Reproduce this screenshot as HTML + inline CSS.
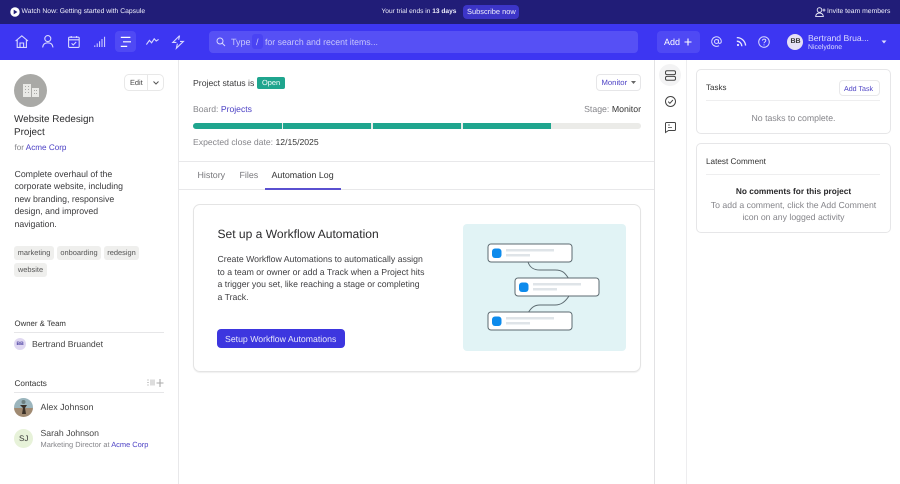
<!DOCTYPE html>
<html><head><meta charset="utf-8">
<style>
html,body{margin:0;padding:0;width:900px;height:484px;overflow:hidden;background:#fff;font-family:"Liberation Sans",sans-serif;color:#333;text-rendering:geometricPrecision}
.t{position:absolute;white-space:nowrap;line-height:14px;font-size:10px}
.b{position:absolute;box-sizing:border-box}
a{color:#4a3fc4;text-decoration:none}
.g{color:#85858a}
svg{position:absolute;overflow:visible}
.tag{position:absolute;height:14px;background:#efefed;border-radius:3px;font-size:7.45px;line-height:14px;color:#555;text-align:center}
</style></head><body>
<!-- top bar -->
<div class="b" style="left:0;top:0;width:900px;height:24px;background:#211d78"></div>
<svg style="left:10px;top:7px" width="10" height="10"><circle cx="5" cy="5" r="4.7" fill="#fff"/><path d="M3.7 2.6 7.4 5 3.7 7.4Z" fill="#211d78"/></svg>
<div class="t" style="left:21.5px;top:5px;color:#eeeefa;font-size:6.8px">Watch Now: Getting started with Capsule</div>
<div class="t" style="left:381.5px;top:5px;color:#eeeefa;font-size:6.6px">Your trial ends in <b>13 days</b></div>
<div class="b" style="left:463px;top:5px;width:56px;height:14px;background:#3c35c8;border-radius:4px"></div>
<div class="t" style="left:467px;top:5px;color:#eeeefa;font-size:7.45px">Subscribe now</div>
<svg style="left:815px;top:7px" width="11" height="10" fill="none" stroke="#eeeefa" stroke-width=".9"><circle cx="4.5" cy="3" r="2.3"/><path d="M.6 9.4C1 6.8 2.6 6 4.5 6S8 6.8 8.4 9.4ZM9 1.6v3M7.5 3.1h3"/></svg>
<div class="t" style="left:827px;top:5px;color:#eeeefa;font-size:6.8px">Invite team members</div>

<!-- nav -->
<div class="b" style="left:0;top:24px;width:900px;height:36px;background:#3d36f2"></div>
<div class="b" style="left:115px;top:31px;width:21px;height:21px;background:#4f49f4;border-radius:4px"></div>
<svg style="left:15px;top:35px" width="14" height="13" fill="none" stroke="#d8d8ff" stroke-width="1.1"><path d="M.6 6 6.8.8 13 6M2.2 5v7.4h9.2V5M5 12.4V8h3.6v4.4"/></svg>
<svg style="left:42px;top:35px" width="12" height="13" fill="none" stroke="#d8d8ff" stroke-width="1.1"><circle cx="5.8" cy="3.6" r="3"/><path d="M.6 12.4C1 9 3 7.8 5.8 7.8S10.6 9 11 12.4"/></svg>
<svg style="left:68px;top:36px" width="12" height="12" fill="none" stroke="#d8d8ff" stroke-width="1.1"><rect x=".6" y="1.2" width="10.6" height="10.2" rx="1"/><path d="M.6 3.8h10.6M3.2 0v2M8.6 0v2M3.6 7.4 5.2 9l3-3"/></svg>
<svg style="left:94px;top:36px" width="12" height="12" fill="none" stroke="#d8d8ff" stroke-width="1"><path d="M.8 11V9.4M3.2 11V7.4M5.6 11V5.2M8 11V3M10.6 11V.8"/></svg>
<svg style="left:120px;top:36px" width="12" height="12" fill="none" stroke="#fff" stroke-width="1.2"><path d="M.8 1.4h9.6M3 5.8h8M.8 10.4h6.4"/></svg>
<svg style="left:146px;top:37px" width="13" height="9" fill="none" stroke="#d8d8ff" stroke-width="1.1"><path d="M.4 7.6 3.4 3.4l2.2 2.4 2.6-4 2 2.2 2.4-1.6"/></svg>
<svg style="left:172px;top:35px" width="12" height="14" fill="none" stroke="#d8d8ff" stroke-width="1.1"><path d="M7.6.6 .8 7.4h3.6M8 6.4h3.4L4.4 13.2 5.4 8.6M7.6.6 6.6 4.8"/></svg>
<div class="b" style="left:209px;top:31px;width:429px;height:22px;background:#5650f5;border-radius:4px"></div>
<svg style="left:216px;top:37px" width="10" height="10" fill="none" stroke="#d8d8ff" stroke-width="1"><circle cx="4" cy="4" r="3"/><path d="M6.2 6.2 9 9"/></svg>
<div class="t" style="left:231px;top:35px;color:#c8c7fb;font-size:9px">Type</div>
<div class="b" style="left:252px;top:34px;width:11px;height:15px;background:#4a43f3;border-radius:3px"></div>
<div class="t" style="left:256px;top:35px;color:#c8c7fb;font-size:9px">/</div>
<div class="t" style="left:265px;top:35px;color:#c8c7fb;font-size:8.73px">for search and recent items...</div>
<div class="b" style="left:657px;top:31px;width:43px;height:22px;background:#4f49f4;border-radius:4px"></div>
<div class="t" style="left:664px;top:35px;color:#fff;font-size:9px">Add</div>
<svg style="left:684px;top:38px" width="8" height="8" stroke="#fff" stroke-width="1.1"><path d="M4 .5v7M.5 4h7"/></svg>
<svg style="left:711px;top:36px" width="11" height="11" fill="none" stroke="#d8d8ff" stroke-width="1"><circle cx="5.5" cy="5.5" r="2"/><path d="M7.5 3.5v2.8c0 1.6 2.8 1.4 2.8-.8A4.8 4.8 0 1 0 8 9.7"/></svg>
<svg style="left:736px;top:36px" width="11" height="11" fill="none" stroke="#e6e6ff" stroke-width="1.3"><circle cx="2" cy="9" r="1.1" fill="#e6e6ff" stroke="none"/><path d="M.8 5.2A5 5 0 0 1 5.8 10.2M.8 1.6A8.6 8.6 0 0 1 9.6 9.6"/></svg>
<svg style="left:758px;top:36px" width="12" height="12" fill="none" stroke="#d8d8ff" stroke-width="1"><circle cx="6" cy="6" r="5.3"/><path d="M4.4 4.6C4.4 2.6 7.8 2.7 7.8 4.6 7.8 5.9 6 5.9 6 7.3M6 8.4v1"/></svg>
<div class="b" style="left:787px;top:34px;width:16px;height:16px;background:#e5dff5;border-radius:50%"></div>
<div class="t" style="left:790.5px;top:35px;color:#333;font-size:7px;font-weight:bold;line-height:14px">BB</div>
<div class="t" style="left:808px;top:31px;color:#dcdcff;font-size:8.64px">Bertrand Brua...</div>
<div class="t" style="left:808px;top:41px;color:#dcdcff;font-size:6.9px">Nicelydone</div>
<svg style="left:881px;top:40px" width="6" height="4"><path d="M.5.5h5L3 3.5Z" fill="#dcdcff"/></svg>

<!-- layout lines -->
<div class="b" style="left:178px;top:60px;width:1px;height:424px;background:#e8e8ea"></div>
<div class="b" style="left:654px;top:60px;width:1px;height:424px;background:#e2e2e4"></div>
<div class="b" style="left:686px;top:60px;width:1px;height:424px;background:#ededef"></div>
<div class="b" style="left:179px;top:161px;width:475px;height:1px;background:#e8e8ea"></div>
<div class="b" style="left:179px;top:189px;width:475px;height:1px;background:#e8e8ea"></div>

<!-- left column -->
<div class="b" style="left:14px;top:74px;width:33px;height:33px;background:#a9a9a6;border-radius:50%"></div>
<svg style="left:23px;top:84px" width="16" height="13" fill="#e9e9e6"><rect x="0" y="0" width="8" height="13"/><rect x="9" y="4" width="7" height="9"/><path d="M2 2h1v1H2zM5 2h1v1H5zM2 5h1v1H2zM5 5h1v1H5zM2 8h1v1H2zM5 8h1v1H5zM11 6h1v1h-1zM13 6h1v1h-1zM11 9h1v1h-1zM13 9h1v1h-1z" fill="#a9a9a6"/></svg>
<div class="b" style="left:124px;top:74px;width:40px;height:17px;border:1px solid #e8e8e8;border-radius:5px"></div>
<div class="b" style="left:147px;top:74px;width:1px;height:17px;background:#e8e8e8"></div>
<div class="t" style="left:130px;top:75.5px;font-size:7.4px;color:#444">Edit</div>
<svg style="left:153px;top:81px" width="6" height="4" fill="none" stroke="#555"><path d="M.5.5 3 3 5.500.5"/></svg>
<div class="t" style="left:14px;top:113px;font-size:9.9px;color:#2c2c2e;line-height:13px">Website Redesign<br>Project</div>
<div class="t" style="left:14.500px;top:141px;font-size:8.14px"><span class="g">for</span> <a>Acme Corp</a></div>
<div class="t" style="left:14.500px;top:167.500px;font-size:8.75px;color:#3a3a3c;line-height:12.6px">Complete overhaul of the<br>corporate website, including<br>new branding, responsive<br>design, and improved<br>navigation.</div>
<div class="tag" style="left:14px;top:246px;width:40px">marketing</div>
<div class="tag" style="left:57px;top:246px;width:44px">onboarding</div>
<div class="tag" style="left:104px;top:246px;width:35px">redesign</div>
<div class="tag" style="left:14px;top:263px;width:33px">website</div>
<div class="t" style="left:14.500px;top:316.500px;font-size:7.8px;color:#333">Owner &amp; Team</div>
<div class="b" style="left:14px;top:332px;width:150px;height:1px;background:#e6e6e8"></div>
<div class="b" style="left:14px;top:338px;width:12px;height:12px;background:#e0d8f2;border-radius:50%"></div>
<div class="t" style="left:16.500px;top:337px;font-size:5px;font-weight:bold;color:#4a3fa0">BB</div>
<div class="t" style="left:32px;top:337px;font-size:8.7px;color:#444">Bertrand Bruandet</div>
<div class="t" style="left:14.500px;top:376.500px;font-size:8.2px;color:#333">Contacts</div>
<svg style="left:147px;top:379px" width="17" height="8" fill="none"><path d="M0 1h2M0 3.500h2M0 6h2" stroke="#ccc"/><rect x="3" y=".5" width="5" height="6" fill="#ddd"/><path d="M13 0v8M9.500 4h7" stroke="#aaa" stroke-width="1.100"/></svg>
<div class="b" style="left:14px;top:392px;width:150px;height:1px;background:#e6e6e8"></div>
<svg style="left:14px;top:398px" width="20" height="20"><defs><clipPath id="c"><circle cx="9.500" cy="9.500" r="9.500"/></clipPath></defs><g clip-path="url(#c)"><rect width="20" height="10" fill="#9bb5bd"/><rect y="10" width="20" height="10" fill="#a08a72"/><path d="M6 7h7l-2 3 1 6H8l1-6Z" fill="#3a3027"/><circle cx="9.500" cy="4" r="2" fill="#6d7f80"/></g></svg>
<div class="t" style="left:40.500px;top:400px;font-size:8.83px;color:#444">Alex Johnson</div>
<div class="b" style="left:14px;top:429px;width:19px;height:19px;background:#e7f2d9;border-radius:50%"></div>
<div class="t" style="left:19px;top:431.500px;font-size:8px;color:#333">SJ</div>
<div class="t" style="left:40.500px;top:426px;font-size:8.7px;color:#444">Sarah Johnson</div>
<div class="t" style="left:40.500px;top:437.500px;font-size:7.45px"><span class="g">Marketing Director at</span> <a>Acme Corp</a></div>

<!-- center top -->
<div class="t" style="left:193px;top:76px;font-size:8.7px;color:#3a3a3c">Project status is</div>
<div class="b" style="left:257px;top:77px;width:28px;height:12px;background:#1fa58e;border-radius:2px"></div>
<div class="t" style="left:262px;top:76px;font-size:7.4px;color:#fff">Open</div>
<div class="b" style="left:596px;top:74px;width:45px;height:17px;border:1px solid #e6e6e8;border-radius:4px"></div>
<div class="t" style="left:601.500px;top:75.500px;font-size:7.7px;color:#4a3fc4">Monitor</div>
<svg style="left:631px;top:81px" width="5" height="3"><path d="M0 0h5L2.500 3Z" fill="#666"/></svg>
<div class="t" style="left:193px;top:102px;font-size:8.63px"><span class="g">Board:</span> <a>Projects</a></div>
<div class="t" style="right:259px;top:102px;font-size:8.76px"><span class="g">Stage:</span> <span style="color:#333">Monitor</span></div>
<div class="b" style="left:193px;top:123px;width:448px;height:6px;background:#ebebe8;border-radius:3px"></div>
<div class="b" style="left:193px;top:123px;width:88.500px;height:6px;background:#1fa58e;border-radius:3px 0 0 3px"></div>
<div class="b" style="left:283px;top:123px;width:88px;height:6px;background:#1fa58e"></div>
<div class="b" style="left:372.500px;top:123px;width:88.500px;height:6px;background:#1fa58e"></div>
<div class="b" style="left:462.500px;top:123px;width:88.500px;height:6px;background:#1fa58e"></div>
<div class="t" style="left:193px;top:135px;font-size:8.65px"><span class="g">Expected close date:</span> <span style="color:#333">12/15/2025</span></div>
<div class="t" style="left:197.500px;top:168px;font-size:8.9px;color:#77777b">History</div>
<div class="t" style="left:239.500px;top:168px;font-size:8.9px;color:#77777b">Files</div>
<div class="t" style="left:271.500px;top:168px;font-size:8.9px;color:#333">Automation Log</div>
<div class="b" style="left:265px;top:188px;width:76px;height:2px;background:#5a50d0"></div>

<!-- card -->
<div class="b" style="left:193px;top:204px;width:448px;height:168px;border:1px solid #e4e4e4;border-radius:7px;box-shadow:0 1px 1px #f0f0f0"></div>
<div class="t" style="left:217.500px;top:227px;font-size:12.05px;color:#2a2a2c">Set up a Workflow Automation</div>
<div class="t" style="left:217.500px;top:253px;font-size:8.72px;color:#3f3f42;line-height:12.7px">Create Workflow Automations to automatically assign<br>to a team or owner or add a Track when a Project hits<br>a trigger you set, like reaching a stage or completing<br>a Track.</div>
<div class="b" style="left:217px;top:329px;width:128px;height:19px;background:#3d36df;border-radius:4px"></div>
<div class="t" style="left:225px;top:331.500px;font-size:8.72px;color:#e6e6fb">Setup Workflow Automations</div>
<!-- illustration -->
<div class="b" style="left:462.500px;top:224px;width:163px;height:127px;background:#e1f3f5;border-radius:4px"></div>
<svg style="left:462.500px;top:224px" width="163" height="127" fill="none">
<path d="M65 38c2 6 6 8 12 8h15c8 0 10 3 14 9M106 72c-4 6-8 9-14 9H77c-6 0-9 3-12 8" stroke="#5c6a70" stroke-width="1"/>
<g stroke="#5c6a70" stroke-width="1" fill="#fff"><rect x="25" y="20" width="84" height="18" rx="3"/><rect x="52" y="54" width="84" height="18" rx="3"/><rect x="25" y="88" width="84" height="18" rx="3"/></g>
<g fill="#0d8bec"><rect x="29" y="24.500" width="9.500" height="9.500" rx="3"/><rect x="56" y="58.500" width="9.500" height="9.500" rx="3"/><rect x="29" y="92.500" width="9.500" height="9.500" rx="3"/></g>
<g fill="#dfe4e8"><rect x="43" y="25" width="48" height="2.500"/><rect x="43" y="30" width="24" height="2.500"/><rect x="70" y="59" width="48" height="2.500"/><rect x="70" y="64" width="24" height="2.500"/><rect x="43" y="93" width="48" height="2.500"/><rect x="43" y="98" width="24" height="2.500"/></g>
</svg>

<!-- sidebar icons -->
<div class="b" style="left:659px;top:64px;width:22px;height:22px;background:#f3f3f4;border-radius:50%"></div>
<svg style="left:664.500px;top:69.500px" width="11" height="11" fill="none" stroke="#444" stroke-width="1"><rect x=".5" y=".8" width="10" height="3.800" rx="1.500"/><rect x=".5" y="6.400" width="10" height="3.800" rx="1.500"/></svg>
<svg style="left:664.500px;top:95.500px" width="11" height="11" fill="none" stroke="#444" stroke-width="1"><circle cx="5.500" cy="5.500" r="5"/><path d="M3.200 5.600 4.900 7.300 7.900 4"/></svg>
<svg style="left:664.500px;top:122px" width="11" height="11" fill="none" stroke="#444" stroke-width="1"><path d="M1.500.5h8a1 1 0 0 1 1 1v6a1 1 0 0 1-1 1H3.500L.5 10.500v-9a1 1 0 0 1 1-1Z"/><path d="M3 3h2M3 5.500h4" stroke-width=".8"/></svg>

<!-- right cards -->
<div class="b" style="left:696px;top:69px;width:195px;height:65px;border:1px solid #e6e6e8;border-radius:5px"></div>
<div class="t" style="left:706px;top:80.500px;font-size:8px;color:#333">Tasks</div>
<div class="b" style="left:839px;top:80px;width:41px;height:16px;border:1px solid #e8e8ea;border-radius:4px"></div>
<div class="t" style="left:844px;top:81.500px;font-size:7.1px;color:#4a3fc4">Add Task</div>
<div class="b" style="left:706px;top:100px;width:174px;height:1px;background:#eeeeef"></div>
<div class="t" style="left:696px;width:195px;text-align:center;top:111px;font-size:8.74px;color:#85858a">No tasks to complete.</div>
<div class="b" style="left:696px;top:143px;width:195px;height:90px;border:1px solid #e6e6e8;border-radius:5px"></div>
<div class="t" style="left:706px;top:154.500px;font-size:8.18px;color:#333">Latest Comment</div>
<div class="b" style="left:706px;top:174px;width:174px;height:1px;background:#eeeeef"></div>
<div class="t" style="left:696px;width:195px;text-align:center;top:184px;font-size:8.3px;font-weight:bold;color:#2a2a2c">No comments for this project</div>
<div class="t" style="left:696px;width:195px;text-align:center;top:198.500px;font-size:8.71px;color:#85858a;line-height:12.7px">To add a comment, click the Add Comment<br>icon on any logged activity</div>
</body></html>
